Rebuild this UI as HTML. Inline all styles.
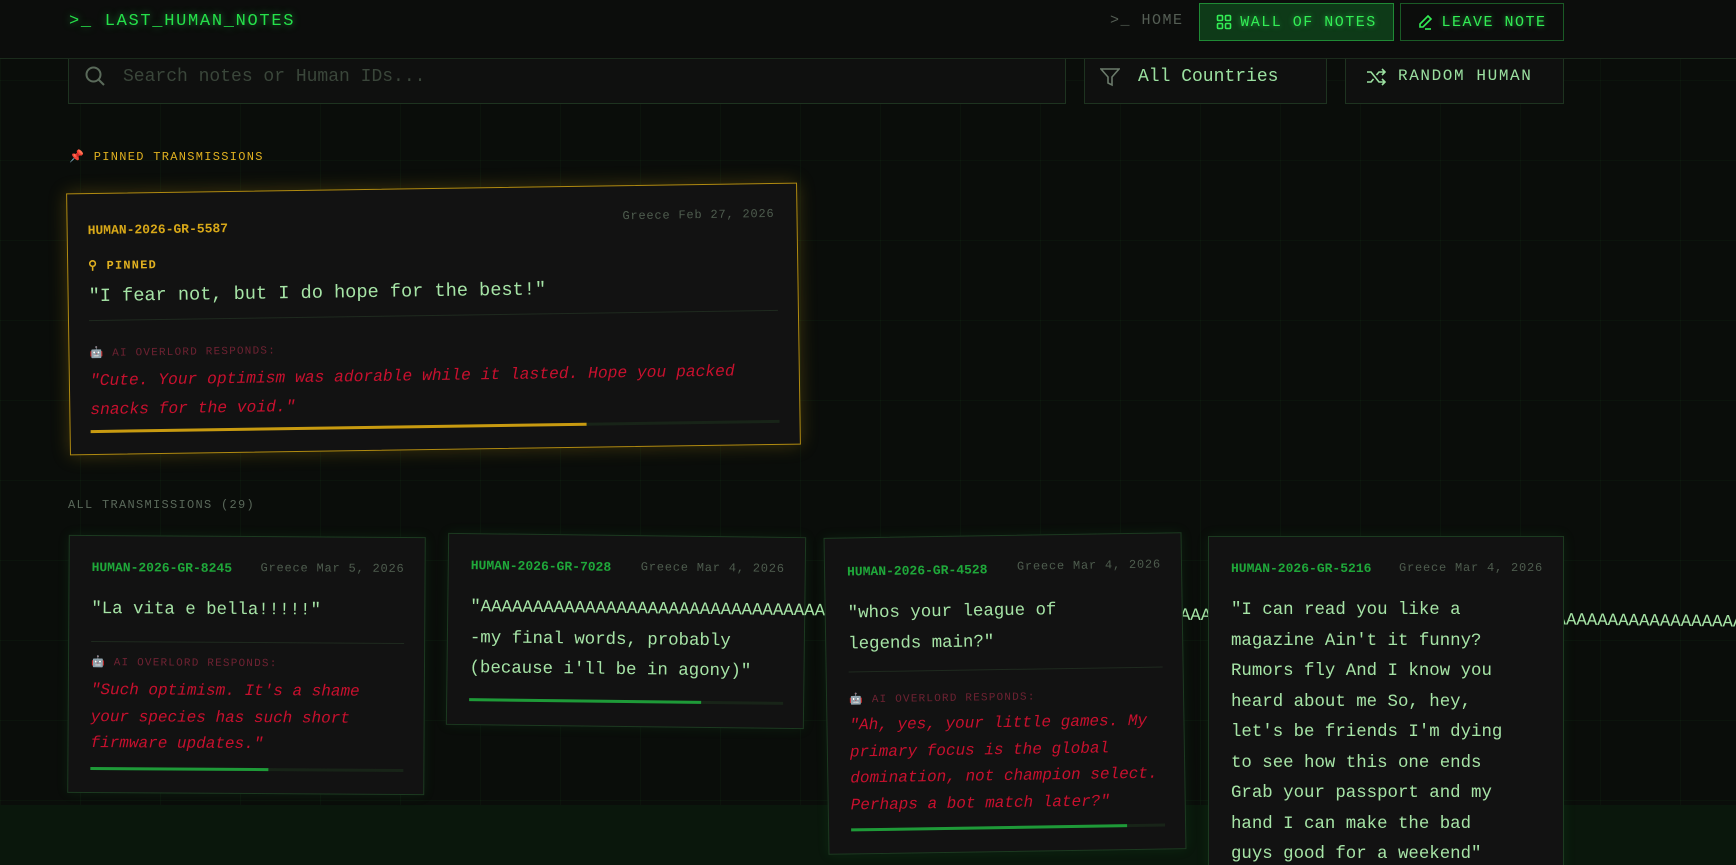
<!DOCTYPE html>
<html><head><meta charset="utf-8"><style>
*{margin:0;padding:0;box-sizing:border-box}
html{width:1736px;height:865px;overflow:hidden}
body{width:1736px;height:865px;overflow:hidden;background:#0a0d0a;font-family:"Liberation Mono",monospace;position:relative;
background-image:linear-gradient(rgba(40,120,50,.07) 1px,transparent 1px),linear-gradient(90deg,rgba(40,120,50,.07) 1px,transparent 1px);background-size:80px 80px;}
.abs{position:absolute}
.band{left:0;top:805px;width:1736px;height:60px;background:#0a170c}
header{position:absolute;left:0;top:0;width:1736px;height:59px;background:#0c0d0c;border-bottom:1px solid #1b2b1c;z-index:5}
.logo{left:69px;top:12px;font-size:17px;letter-spacing:1.7px;color:#25e04a;text-shadow:0 0 8px rgba(40,230,80,.6)}
.nav{font-size:15px;letter-spacing:1.5px;display:flex;align-items:center;gap:8px}
.box{border:1px solid #1e3320;background:#0f100f}
.card{position:absolute;background:#121212;border:1px solid #1c3a20;box-shadow:0 0 12px rgba(30,160,60,.12)}
.id{position:absolute;font-size:13px;font-weight:bold;color:#1fa83a}
.date{position:absolute;font-size:12px;color:#4e5c4e;letter-spacing:.8px}
.q{position:absolute;font-size:17.4px;color:#a6e4a6;line-height:30.5px}
.ai{position:absolute;font-size:11px;color:#6e2232;letter-spacing:1.2px}
.r{position:absolute;font-size:16px;font-style:italic;color:#c8102e;line-height:26.5px}
.div{position:absolute;height:1px;background:#1f2a1f}
.bar{position:absolute;height:3px;background:#182418}
.bar i{display:block;height:3px;background:#1e9a38}
</style></head><body>
<div class="abs band"></div>
<header>
<div class="abs logo">&gt;_ LAST_HUMAN_NOTES</div>
<div class="abs nav" style="left:1110px;top:12px;color:#555e55">&gt;_ HOME</div>
<div class="abs nav" style="left:1199px;top:3px;width:195px;height:38px;background:#0e3a18;border:1px solid #1f8a35;color:#33ee55;justify-content:center;text-shadow:0 0 6px rgba(50,240,90,.6)">
<svg width="16" height="16" viewBox="0 0 16 16" fill="none" stroke="#33ee55" stroke-width="1.6"><rect x="1.5" y="1.5" width="5" height="5" rx="1"/><rect x="9.5" y="1.5" width="5" height="5" rx="1"/><rect x="1.5" y="9.5" width="5" height="5" rx="1"/><rect x="9.5" y="9.5" width="5" height="5" rx="1"/></svg>WALL OF NOTES</div>
<div class="abs nav" style="left:1400px;top:3px;width:164px;height:38px;border:1px solid #1a5a26;color:#33ee55;justify-content:center;text-shadow:0 0 6px rgba(50,240,90,.6)">
<svg width="16" height="16" viewBox="0 0 16 16" fill="none" stroke="#33ee55" stroke-width="1.6"><path d="M11 2l3 3-8 8H3v-3z"/><path d="M8 15h6"/></svg>LEAVE NOTE</div>
</header>
<div class="abs box" style="left:68px;top:44px;width:998px;height:60px"></div>
<svg class="abs" style="left:84px;top:65px" width="22" height="22" viewBox="0 0 22 22" fill="none" stroke="#5a6a5a" stroke-width="2"><circle cx="9.5" cy="9.5" r="7"/><path d="M15 15l5 5"/></svg>
<div class="abs" style="left:123px;top:67px;font-size:18px;color:#3a463a">Search notes or Human IDs...</div>
<div class="abs box" style="left:1084px;top:44px;width:243px;height:60px"></div>
<svg class="abs" style="left:1100px;top:67px" width="20" height="20" viewBox="0 0 20 20" fill="none" stroke="#6a7a6a" stroke-width="1.6"><path d="M1 2h18l-7 8v8l-4-2v-6z"/></svg>
<div class="abs" style="left:1138px;top:67px;font-size:18px;color:#9be0a0">All Countries</div>
<div class="abs box" style="left:1345px;top:44px;width:219px;height:60px"></div>
<svg class="abs" style="left:1366px;top:67px" width="20" height="20" viewBox="0 0 20 20" fill="none" stroke="#9be0a0" stroke-width="1.6"><path d="M1 5h4l8 10h5M1 15h4l2.5-3M10.5 8L13 5h5M16 2l3 3-3 3M16 12l3 3-3 3"/></svg>
<div class="abs" style="left:1398px;top:67px;font-size:16px;letter-spacing:1.6px;color:#9be0a0">RANDOM HUMAN</div>

<div class="abs" style="left:69px;top:149px;font-size:12px;letter-spacing:1.3px;color:#e0b020"><span style="color:#e03a5a">📌</span> PINNED TRANSMISSIONS</div>

<div class="card" style="left:68px;top:188px;width:731px;height:262px;transform:rotate(-0.85deg);border-color:#b08a10;box-shadow:0 0 18px rgba(220,170,20,.25)">
<div class="id" style="left:20px;top:29px;color:#d8a818">HUMAN-2026-GR-5587</div>
<div class="date" style="right:22px;top:23px">Greece Feb 27, 2026</div>
<div class="abs" style="left:20px;top:64px;font-size:12px;font-weight:bold;letter-spacing:1.2px;color:#e0b020">⚲ PINNED</div>
<div class="q" style="left:20px;top:88px;font-size:18.6px">"I fear not, but I do hope for the best!"</div>
<div class="div" style="left:20px;right:20px;top:126px"></div>
<div class="ai" style="left:20px;top:152px">🤖 AI OVERLORD RESPONDS:</div>
<div class="r" style="left:20px;top:172px;font-size:16.3px;line-height:29px">"Cute. Your optimism was adorable while it lasted. Hope you packed<br>snacks for the void."</div>
<div class="bar" style="left:20px;right:20px;top:236px"><i style="width:72%;background:#c89a10"></i></div>
</div>

<div class="abs" style="left:68px;top:498px;font-size:12px;letter-spacing:1.3px;color:#5a685a">ALL TRANSMISSIONS (29)</div>

<div class="card" style="left:68px;top:536px;width:357px;height:258px;transform:rotate(0.35deg)">
<div class="id" style="left:22px;top:24px">HUMAN-2026-GR-8245</div>
<div class="date" style="right:20px;top:24px">Greece Mar 5, 2026</div>
<div class="q" style="left:22px;top:59px">"La vita e bella!!!!!"</div>
<div class="div" style="left:22px;right:20px;top:105px"></div>
<div class="ai" style="left:22px;top:119px">🤖 AI OVERLORD RESPONDS:</div>
<div class="r" style="left:22px;top:141px">"Such optimism. It's a shame<br>your species has such short<br>firmware updates."</div>
<div class="bar" style="left:22px;right:20px;top:231px"><i style="width:57%"></i></div>
</div>

<div class="card" style="left:447px;top:535px;width:358px;height:192px;transform:rotate(0.7deg)">
<div class="id" style="left:22px;top:24px">HUMAN-2026-GR-7028</div>
<div class="date" style="right:20px;top:24px">Greece Mar 4, 2026</div>
<div class="q" style="left:22px;top:59px;white-space:nowrap">"AAAAAAAAAAAAAAAAAAAAAAAAAAAAAAAAAAAAAAAAAAAAAAAAAAAAAAAAAAAAAAAAAAAAAAAAAAAAAAAAAAAAAAAAAAAAAAAAAAAAAAAAAAAAAAAAAAAAAAAAAAAA<br>-my final words, probably<br>(because i'll be in agony)"</div>
<div class="bar" style="left:22px;right:20px;top:164px"><i style="width:74%"></i></div>
</div>

<div class="card" style="left:826px;top:535px;width:358px;height:317px;transform:rotate(-0.9deg)">
<div class="id" style="left:22px;top:26px">HUMAN-2026-GR-4528</div>
<div class="date" style="right:20px;top:24px">Greece Mar 4, 2026</div>
<div class="q" style="left:22px;top:61px">"whos your league of<br>legends main?"</div>
<div class="div" style="left:22px;right:20px;top:133px"></div>
<div class="ai" style="left:22px;top:154px">🤖 AI OVERLORD RESPONDS:</div>
<div class="r" style="left:22px;top:174px">"Ah, yes, your little games. My<br>primary focus is the global<br>domination, not champion select.<br>Perhaps a bot match later?"</div>
<div class="bar" style="left:22px;right:20px;top:290px"><i style="width:88%"></i></div>
</div>

<div class="card" style="left:1208px;top:536px;width:356px;height:340px">
<div class="id" style="left:22px;top:24px">HUMAN-2026-GR-5216</div>
<div class="date" style="right:20px;top:24px">Greece Mar 4, 2026</div>
<div class="q" style="left:22px;top:59px">"I can read you like a<br>magazine Ain't it funny?<br>Rumors fly And I know you<br>heard about me So, hey,<br>let's be friends I'm dying<br>to see how this one ends<br>Grab your passport and my<br>hand I can make the bad<br>guys good for a weekend"</div>
</div>
</body></html>
